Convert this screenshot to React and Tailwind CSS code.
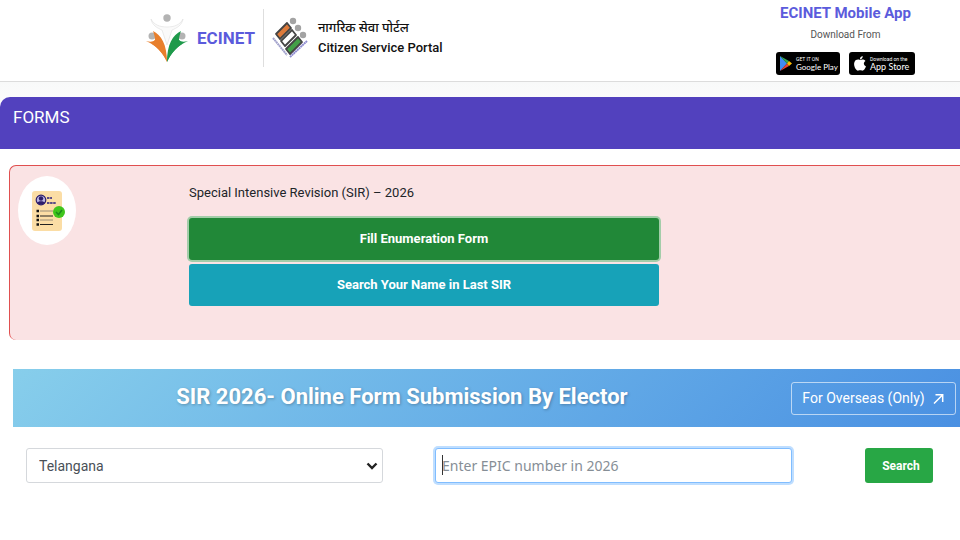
function EcinetLogo() {
  return (
    <svg viewBox="0 0 42 50" className="h-[50px] w-[42px]" aria-hidden="true">
      <circle cx="21" cy="5" r="3.700" fill="#b3b3b3" />
      <circle cx="6" cy="23" r="3.500" fill="#b3b3b3" />
      <circle cx="36" cy="23" r="3.500" fill="#b3b3b3" />
      <path d="M5 6C8 12 14 14 21 14S34 12 37 6C36 12 31 15 26 17L21 32L16 17C11 15 6 12 5 6Z" fill="#fafafa" stroke="#dedede" strokeWidth=".6" />
      <path d="M0 28C4 29 7 29 9 27C9 24 8 21 7 18C15 22 21 31 21 49C17 40 10 32 0 28Z" fill="#e87f2c" />
      <path d="M9 27C15 30 20 38 21 49C17 40 12 35 6 31Z" fill="#e87f2c" />
      <path d="M42 28C38 29 35 29 33 27C33 24 34 21 35 18C27 22 21 31 21 49C25 40 32 32 42 28Z" fill="#1f9a4b" />
      <path d="M33 27C27 30 22 38 21 49C25 40 30 35 36 31Z" fill="#1f9a4b" />
    </svg>
  );
}

function EciLogo() {
  return (
    <svg viewBox="0 0 36 42" className="h-[42px] w-9" aria-hidden="true">
      <g fill="#a3a3a3">
        <circle cx="21" cy="4" r="3.200" />
        <circle cx="26" cy="11" r="3.200" />
        <circle cx="31" cy="18" r="3.200" />
      </g>
      <g stroke="#444" strokeWidth="1.800" strokeLinejoin="round">
        <path d="M4 17L15 6L19 11L8 22Z" fill="#dd7a3a" />
        <path d="M9 24L20 13L24 18L13 29Z" fill="#fff" />
        <path d="M14 32L26 20L30 25L18 37Z" fill="#43a047" />
      </g>
      <path d="M1 21L15 38" stroke="#a3a3cc" strokeWidth="2" strokeDasharray="2 .4" />
      <path d="M18 40L35 24" stroke="#8f8dd0" strokeWidth="2" strokeDasharray="2 .4" />
    </svg>
  );
}

function FormIcon() {
  return (
    <svg viewBox="0 0 36 42" className="h-[42px] w-9" aria-hidden="true">
      <rect x="3" y="1" width="30" height="40" rx="3" fill="#fbdda5" />
      <circle cx="12" cy="10" r="4.800" fill="#b9b4e0" stroke="#2d1d6b" strokeWidth="1.200" />
      <circle cx="12" cy="8.500" r="2.200" fill="#2d1d6b" />
      <path d="M8 13C9 10.500 15 10.500 16 13Q12 16 8 13Z" fill="#2d1d6b" />
      <path d="M18 8H23M18 13H27" stroke="#5a4a85" strokeWidth="2" strokeDasharray="2.500 .6" />
      <path d="M11 21H24M11 30H24" stroke="#9a8e78" strokeWidth="1" />
      <path d="M11 26H24M11 34.500H24" stroke="#222" strokeWidth="1.200" />
      <path d="M7.500 21H10M7.500 26H10M7.500 30H10M7.500 34.500H10" stroke="#111" strokeWidth="2.400" />
      <circle cx="30" cy="22" r="6" fill="#3fc51c" />
      <path d="M27 22L29.500 24.500L33 20" fill="none" stroke="#1d8a1d" strokeWidth="1.500" />
    </svg>
  );
}

export default function App() {
  return (
    <div className="min-h-screen bg-white font-[Roboto,'Noto_Sans',sans-serif] text-[#212529]">
      <header className="flex h-[82px] justify-between border-b border-[#dcdcdc] pr-[45px] pl-[146px]">
        <div className="flex items-center pb-[5px]">
          <EcinetLogo />
          <span className="ml-[9px] text-[17px] leading-6 font-bold text-[#5b5bdc]">ECINET</span>
          <div className="mx-2 h-[58px] border-l border-[#dedede]" />
          <EciLogo />
          <div className="ml-[10px] text-[13px] leading-5 font-medium text-[#111]">
            <div>नागरिक सेवा पोर्टल</div>
            <div>Citizen Service Portal</div>
          </div>
        </div>
        <div className="flex flex-col items-center pt-[3px]">
          <h2 className="text-[15px] leading-5 font-bold text-[#5b5bdc]">ECINET Mobile App</h2>
          <p className="mt-1 text-[10px] leading-4 text-[#555]">Download From</p>
          <div className="mt-[9px] flex gap-[9px]">
            <a href="#google-play" className="flex h-[23px] w-16 items-center gap-1 rounded-[3px] bg-black pl-1 text-white">
              <svg viewBox="0 0 12 15" className="h-[15px] w-3 shrink-0" aria-hidden="true">
                <path d="M0 0L7 7.500L0 15Z" fill="#3f8cf4" />
                <path d="M0 0L9 5L7 7.500Z" fill="#34a853" />
                <path d="M0 15L9 10L7 7.500Z" fill="#ea4335" />
                <path d="M9 5L12 7.500L9 10L7 7.500Z" fill="#fbbc04" />
              </svg>
              <span className="flex flex-col">
                <span className="text-[5px] leading-[6px]">GET IT ON</span>
                <span className="font-[Lato,sans-serif] text-[8px] leading-[10px] whitespace-nowrap">Google Play</span>
              </span>
            </a>
            <a href="#app-store" className="flex h-[23px] w-[66px] items-center gap-1 rounded-[3px] bg-black pl-[5px] text-white">
              <svg viewBox="0 0 12 15" className="h-[15px] w-3 shrink-0" fill="white" aria-hidden="true">
                <path d="M6 4C7.500 3.200 10 3 11.500 5C9 6.500 9.500 9.500 12 10.500C11 13 9.500 15 8 14.600C6.500 14 5.500 14 4.500 14.600C2 15.500-1 9 .5 6C1.500 3.500 4 3.200 6 4ZM6 3.400C5.800 1.700 7 .3 8.700 0C8.800 1.700 7.700 3.200 6 3.400Z" />
              </svg>
              <span className="flex flex-col">
                <span className="text-[5px] leading-[6px] whitespace-nowrap">Download on the</span>
                <span className="font-[Lato,sans-serif] text-[9px] leading-[10px] whitespace-nowrap">App Store</span>
              </span>
            </a>
          </div>
        </div>
      </header>

      <main>
        <section className="bg-linear-to-b from-[#f8f9f9] to-white to-15% pt-[15px]">
          <h1 className="h-[52px] rounded-tl-[10px] bg-[#5241be] px-[13px] pt-2 text-[17px] leading-6 text-white">FORMS</h1>
          <div className="mt-4 ml-[9px] flex h-[175px] rounded-l-[7px] border-t border-l border-[#e04f4f] bg-[#fae3e4]">
            <div className="mt-[10px] ml-2 flex h-[69px] w-[58px] shrink-0 items-center justify-center rounded-[50%] bg-white">
              <FormIcon />
            </div>
            <div className="ml-[113px] w-[470px] pt-[17px]">
              <p className="text-[13px] leading-5">Special Intensive Revision (SIR) – 2026</p>
              <div className="mt-[15px] flex flex-col gap-1 text-[13px] font-bold text-white">
                <button className="h-[42px] rounded-[3px] bg-[#218838] shadow-[0_0_0_2px_#a3cda9]">Fill Enumeration Form</button>
                <button className="h-[42px] rounded-[3px] bg-[#17a2b8]">Search Your Name in Last SIR</button>
              </div>
            </div>
          </div>
        </section>

        <section className="mt-[29px] ml-[13px]">
          <div className="flex h-[58px] items-center bg-linear-135 from-[#87ceeb] to-[#4a90e2] pr-1">
            <h2 className="flex-1 pb-1 text-center text-[22px] font-bold text-white [text-shadow:1px_1px_3px_rgba(0,0,0,0.25)]">SIR 2026- Online Form Submission By Elector</h2>
            <a href="#overseas" className="flex h-[33px] w-[165px] items-center justify-center gap-2 rounded-[3px] border border-white/60 text-sm text-white">
              For Overseas (Only)
              <svg viewBox="0 0 12 12" className="size-3" fill="none" stroke="white" strokeWidth="1.500" aria-hidden="true">
                <path d="M1 11.500L9.500 3M2.500 2.700H9.700V10" />
              </svg>
            </a>
          </div>
          <form className="flex items-center pt-[21px] pr-[27px] pl-[13px]" onSubmit={(e) => e.preventDefault()}>
            <div className="relative flex-1">
              <select aria-label="State" defaultValue="Telangana" className="block h-[35px] w-full appearance-none rounded-[3px] border border-[#d5d8dc] bg-white px-3 text-sm text-[#495057]">
                <option>Telangana</option>
              </select>
              <svg viewBox="0 0 12 8" className="pointer-events-none absolute top-[14px] right-[5px] h-2 w-3" fill="none" stroke="#222" strokeWidth="2.400" aria-hidden="true">
                <path d="M1.500 1.500L6 6L10.500 1.500" />
              </svg>
            </div>
            <div className="relative ml-[52px] flex-1">
              <input aria-label="EPIC number" placeholder="Enter EPIC number in 2026" className="block h-[35px] w-full rounded-[3px] border border-[#80bdff] bg-white px-1.5 font-['Noto_Sans',sans-serif] text-sm text-[#495057] shadow-[0_0_0_2px_#bfdeff] outline-none placeholder:text-[#868e96]" />
              <span className="pointer-events-none absolute top-[7px] left-[7px] h-5 w-px bg-[#333]" />
            </div>
            <button className="ml-[73px] h-[35px] w-[68px] rounded-[3px] bg-[#28a745] pl-1 text-xs font-bold text-white">Search</button>
          </form>
        </section>
      </main>
    </div>
  );
}
